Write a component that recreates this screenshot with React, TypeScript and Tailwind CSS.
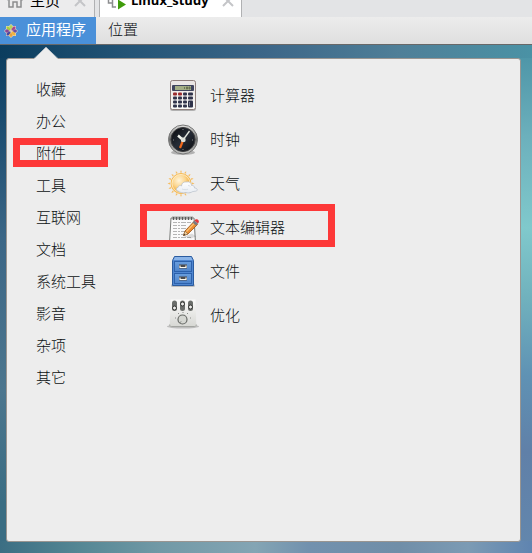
import type { ReactNode } from 'react';

function CalculatorIcon() {
  const cols = [5, 10, 15];
  const rows = [14, 18, 22, 26];
  return (
    <svg width="32" height="32" viewBox="0 0 32 32" aria-hidden="true">
      <defs>
        <linearGradient id="calcBody" x1="0" y1="0" x2="0" y2="1">
          <stop offset="0" stopColor="#e9e4e2" />
          <stop offset="1" stopColor="#fbfaf8" />
        </linearGradient>
      </defs>
      <rect x="3" y="2.5" width="26" height="29.5" rx="2.5" fill="#000" opacity=".25" />
      <rect x="3.5" y="1.5" width="25" height="29" rx="2" fill="url(#calcBody)" stroke="#8f7f7c" />
      <rect x="5" y="6" width="22" height="6" rx="1" fill="#40455e" />
      <rect x="8" y="7" width="16" height="4" fill="#a3ad84" />
      <path d="M17.5 8v2M19.5 8h1v2h-1zM22 8h1v2h-1z" stroke="#56603f" strokeWidth=".7" fill="none" />
      {rows.map((y, r) =>
        cols.map((x, c) => (
          <rect key={x + '-' + y} x={x + 1} y={y - 0.5} width="4" height="3" rx="1" fill={r === 0 && c < 2 ? '#9b2b2e' : '#30334a'} />
        )),
      )}
      <rect x="21" y="13.5" width="5" height="3" rx="1" fill="#30334a" />
      <rect x="21" y="17.5" width="5" height="3" rx="1" fill="#30334a" />
      <rect x="21" y="21.5" width="5" height="7" rx="1" fill="#30334a" />
      <path d="M22.5 23v4" stroke="#777a90" />
    </svg>
  );
}

function ClockIcon() {
  return (
    <svg width="32" height="32" viewBox="0 0 32 32" aria-hidden="true">
      <defs>
        <linearGradient id="clockRim" x1="0" y1="0" x2="0" y2="1">
          <stop offset="0" stopColor="#e2e2e0" />
          <stop offset=".5" stopColor="#6d6f6e" />
          <stop offset="1" stopColor="#c8c8c6" />
        </linearGradient>
        <linearGradient id="clockFace" x1="0" y1="0" x2="1" y2="1">
          <stop offset="0" stopColor="#08090b" />
          <stop offset=".5" stopColor="#252c37" />
          <stop offset="1" stopColor="#0b0c10" />
        </linearGradient>
      </defs>
      <ellipse cx="16" cy="29.5" rx="12" ry="2.5" fill="#000" opacity=".25" />
      <circle cx="16" cy="16.5" r="14.5" fill="url(#clockRim)" stroke="#777" />
      <circle cx="16" cy="16.5" r="12" fill="url(#clockFace)" stroke="#3a3a3c" />
      <path d="M16 6v1M16 26v1M6 17h1M25 17h1" stroke="#888" />
      <path d="M16 17L22.5 8" stroke="#e4e8e0" strokeWidth="1.3" />
      <path d="M16 17l-5-4.5" stroke="#f2f5ee" strokeWidth="2.4" />
      <path d="M15.8 18l-2.8 7" stroke="#ef681c" strokeWidth="2.2" />
      <rect x="14" y="14.5" width="4.5" height="4.5" rx="1.5" fill="#dce0d9" />
    </svg>
  );
}

function WeatherIcon() {
  const rays = [0, 22.5, 45, 67.5, 90, 112.5, 135, 157.5, 180, 202.5, 225, 247.5, 270, 292.5, 315, 337.5];
  return (
    <svg width="32" height="32" viewBox="0 0 32 32" aria-hidden="true">
      <defs>
        <radialGradient id="sunDisc" cx=".4" cy=".35">
          <stop offset="0" stopColor="#fff5dc" />
          <stop offset=".65" stopColor="#fbd58d" />
          <stop offset="1" stopColor="#f4b54b" />
        </radialGradient>
        <linearGradient id="cloudFill" x1="0" y1="0" x2="0" y2="1">
          <stop offset="0" stopColor="#ffffff" />
          <stop offset="1" stopColor="#e7ecf2" />
        </linearGradient>
      </defs>
      {rays.map((a) => (
        <path key={a} d="M13 5.5l1-2.5 1 2.5z" fill="#f6bd61" transform={`rotate(${a} 14 16.5)`} />
      ))}
      <circle cx="14" cy="16.5" r="10" fill="url(#sunDisc)" stroke="#f6bb56" strokeWidth="1" />
      <circle cx="14" cy="16.5" r="9" fill="none" stroke="#fff0cd" strokeWidth=".8" />
      <path
        d="M11 24c-2 0-2.500-3 0-3.500.3-2 2.500-2.300 3.500-1.500 0-3 2.500-4.500 5-4 3-.8 5 1 5 3.500 2-.3 3 .8 3 2.500 3.500.2 3.500 3 1 3.200-2 .3-3 .2-4 1-2 1-4 .8-5.500.3C16 26.500 13 25.500 11 24z"
        fill="url(#cloudFill)"
        stroke="#b5bdc8"
        strokeWidth=".7"
      />
      <path d="M15 22c2 .8 4 1 6 .2M21 18.500c1 0 2 .5 2.500 1.200" stroke="#ccd4dd" fill="none" strokeWidth=".7" />
    </svg>
  );
}

function EditorIcon() {
  return (
    <svg width="32" height="32" viewBox="0 0 32 32" aria-hidden="true">
      <path d="M4 7h23l1.500 25h-26z" fill="#fafafa" stroke="#777976" />
      <path d="M6 11.500h18M6 14.500h14M6 17.500h16M6 20.500h12M6 23.500h10M6 26.500h18M5 29.500h20" stroke="#b4b4b4" strokeDasharray="4 1 2 1 5 1" />
      <path d="M6.500 5v4M9.500 5v4M12.500 5v4M15.500 5v4M18.500 5v4M21.500 5v4M24.500 5v4" stroke="#5a5c5a" strokeWidth="1.500" />
      <path d="M6 5.500h1M9 5.500h1M12 5.500h1M15 5.500h1M18 5.500h1M21 5.500h1M24 5.500h1" stroke="#c5c5c3" />
      <path d="M17 25.500l8-3 4 3-5 2z" fill="#000" opacity=".12" />
      <path d="M16.500 24.500l1.500-4.500L27 10.500l3.500 3-9.500 9.500z" fill="#ec8c30" stroke="#9b5318" strokeWidth=".8" />
      <path d="M19.500 20.500l8-8.500" stroke="#fbc374" strokeWidth="1.200" />
      <path d="M16.500 24.500l1.500-4.500 3 3z" fill="#edcf9e" stroke="#8f6336" strokeWidth=".6" />
      <path d="M16.500 24.500l.6-1.800 1.200 1.200z" fill="#222" />
      <path d="M25.500 11.500l2-2 3.500 3-2 2z" fill="#777b80" />
      <path d="M27.500 9.500c1-1.500 2-1.500 3.500-.8 1.200 1 1 2.500 0 3.800z" fill="#e3373b" />
    </svg>
  );
}

function FilesIcon() {
  return (
    <svg width="32" height="32" viewBox="0 0 32 32" aria-hidden="true">
      <defs>
        <linearGradient id="drawer" x1="0" y1="0" x2="0" y2="1">
          <stop offset="0" stopColor="#699ede" />
          <stop offset="1" stopColor="#4d83ca" />
        </linearGradient>
      </defs>
      <rect x="4" y="29" width="24" height="3" rx="1.500" fill="#000" opacity=".2" />
      <path d="M7.500 1.500h17l2 4v25h-21v-25z" fill="#4f86d0" stroke="#2b5c9f" />
      <path d="M8 2h16l1.500 3H6.500z" fill="#8ab4e8" />
      <rect x="7.500" y="6.500" width="17" height="10" fill="url(#drawer)" stroke="#2c61ac" />
      <rect x="7.500" y="18.500" width="17" height="10" fill="url(#drawer)" stroke="#2c61ac" />
      <path d="M12 9.500h8v4h-8zM12 21.500h8v4h-8z" fill="#4a4b4e" />
      <path d="M13 10.500v2h6v-2M13 22.500v2h6v-2" fill="none" stroke="#fbf8ee" strokeWidth="1.200" />
    </svg>
  );
}

function TweaksIcon() {
  const switches = [
    { x: 7.500, knob: 9 },
    { x: 15.500, knob: 5 },
    { x: 23.500, knob: 8 },
  ];
  return (
    <svg width="32" height="32" viewBox="0 0 32 32" aria-hidden="true">
      <defs>
        <linearGradient id="tweakBody" x1="0" y1="0" x2="0" y2="1">
          <stop offset="0" stopColor="#fbfbfa" />
          <stop offset="1" stopColor="#d6d7d3" />
        </linearGradient>
      </defs>
      <ellipse cx="16" cy="27.500" rx="16" ry="2" fill="#000" opacity=".2" />
      <path d="M3.500.5h25l.8 26c0 1-.5 1.500-1.500 1.500H4.200c-1 0-1.500-.5-1.500-1.500z" fill="url(#tweakBody)" />
      <path d="M2.700 25.500c0 1.500.5 2 1.500 2h23.600c1 0 1.500-.5 1.500-2" stroke="#a3a5a1" fill="none" />
      {switches.map((s) => (
        <g key={s.x}>
          <rect x={s.x - 2.500} y="1.500" width="5" height="10.500" rx="2.500" fill="#6b6e6b" />
          <circle cx={s.x} cy={s.knob} r="2" fill="#eeeeec" stroke="#353735" />
        </g>
      ))}
      <path d="M8 19h1M11 14.500h1M15.500 13.500h1M20 14.500h1M23 19h1" stroke="#8b8d8a" />
      <circle cx="15.500" cy="20.500" r="4.500" fill="#d5d7d2" stroke="#666965" strokeWidth="1.200" />
      <path d="M12.500 24l1.500-1.500" stroke="#666965" />
    </svg>
  );
}

function DistroLogo() {
  return (
    <svg width="14" height="14" viewBox="0 0 14 14" aria-hidden="true">
      <path d="M7 0l2 2h3v3l2 2-2 2v3H9l-2 2-2-2H2V9L0 7l2-2V2h3z" fill="#e6dcc8" />
      <path d="M7 .5L9 3 7 5.500 5 3z" fill="#b5d35c" />
      <path d="M2.500 2.500h2L6.500 5v1.500H5l-2.500-2z" fill="#a8cc3f" />
      <path d="M11.500 2.500h-2L7.500 5v1.500H9l2.500-2z" fill="#a8458e" />
      <path d="M13.500 7L11 9 8.500 7 11 5z" fill="#6a4fa0" />
      <path d="M.5 7L3 5l2.500 2L3 9z" fill="#8a4596" />
      <path d="M11.500 11.500h-2L7.500 9V7.500H9l2.500 2z" fill="#f2b43c" />
      <path d="M2.500 11.500h2L6.500 9V7.500H5l-2.500 2z" fill="#4b4aa0" />
      <path d="M7 13.500L5 11l2-2.500L9 11z" fill="#e9a23b" />
    </svg>
  );
}

function CloseMark() {
  return (
    <svg width="12" height="12" viewBox="0 0 12 12" aria-hidden="true">
      <path d="M1 1l10 10M11 1L1 11" stroke="#c4c5c8" strokeWidth="2" />
    </svg>
  );
}

const categories = ['收藏', '办公', '附件', '工具', '互联网', '文档', '系统工具', '影音', '杂项', '其它'];

const apps: { name: string; icon: ReactNode }[] = [
  { name: '计算器', icon: <CalculatorIcon /> },
  { name: '时钟', icon: <ClockIcon /> },
  { name: '天气', icon: <WeatherIcon /> },
  { name: '文本编辑器', icon: <EditorIcon /> },
  { name: '文件', icon: <FilesIcon /> },
  { name: '优化', icon: <TweaksIcon /> },
];

export default function App() {
  return (
    <div className="flex min-h-screen flex-col font-['Liberation_Sans','Noto_Sans_CJK_SC',sans-serif] text-[15px] font-light text-[#0c1113]">
      <header className="flex h-[17px] items-end gap-1 overflow-hidden bg-[#e3e4e6]">
        <div className="flex h-8 w-[95px] items-center justify-between border-r border-[#b0b1b3] bg-[#ececed] pr-2 pl-[6px] font-normal text-black">
          <button type="button" className="flex items-center gap-[6px]">
            <svg width="18" height="18" viewBox="0 0 18 18" aria-hidden="true">
              <path d="M1 8l8-6 8 6M3 7v8h4v-5h4v5h4V7" fill="none" stroke="#8c8d8f" strokeWidth="1.500" />
            </svg>
            主页
          </button>
          <button type="button" aria-label="关闭主页">
            <CloseMark />
          </button>
        </div>
        <div className="flex h-8 w-[143px] items-center justify-between border-x border-[#b0b1b3] bg-white px-[7px] text-black">
          <button type="button" className="flex items-center gap-1 font-['Open_Sans',sans-serif] text-[13px] font-bold">
            <svg width="20" height="20" viewBox="0 0 20 20" aria-hidden="true">
              <path d="M5 12H1.500V1M9 16H5.500V1H15v7" fill="none" stroke="#8c8d8f" strokeWidth="1.500" />
              <path d="M11 8.500l8 5-8 5z" fill="#3f9c0b" />
            </svg>
            Linux_study
          </button>
          <button type="button" aria-label="关闭 Linux_study">
            <CloseMark />
          </button>
        </div>
      </header>

      <nav className="flex h-7 border-b border-[#686868] bg-linear-to-b from-[#ececec] to-[#dfdfdf]">
        <button type="button" className="flex w-24 items-center gap-2 bg-[#4a90d9] pl-1 font-normal whitespace-nowrap text-white">
          <DistroLogo />
          应用程序
        </button>
        <button type="button" className="px-3">
          位置
        </button>
      </nav>

      <main className="flex flex-1 flex-col bg-[linear-gradient(90deg,#0b3d5e,#245577_25%,#3c6688_50%,#4f7f98_75%,#4a92a5),linear-gradient(90deg,#3b6e83,#558794_15%,#7199a6_30%,#84a5b4_48%,#7291ae_58%,#708ea8_75%,#7c9bb4_88%,#5f84b0),linear-gradient(180deg,#0b3d5e,#1b4c6f_15%,#3b6686_38%,#4c768e_68%,#3a6d83_90%),linear-gradient(180deg,#4a92a5,#6cb0bc_18%,#80c9cc_36%,#70b1bd_50%,#5f92b4_65%,#6080a8_80%,#6387ad)] bg-[length:100%_13px,100%_12px,50%_100%,50%_100%] bg-[position:top,bottom,left,right] bg-no-repeat pt-[13px] pr-[11px] pb-[11px] pl-[6px]">
        <section aria-label="应用程序" className="relative flex flex-1 rounded-[3px] border border-[#999591] bg-[#ededed] py-[14px]">
          <svg className="absolute -top-3 left-[27px]" width="24" height="13" viewBox="0 0 24 13" aria-hidden="true">
            <path d="M0 12L12 0l12 12v1H0z" fill="#ededed" />
            <path d="M0 11.500L12 .5l12 11" fill="none" stroke="#d8dadb" strokeWidth=".6" />
          </svg>
          <ul className="w-[133px] shrink-0">
            {categories.map((name) => (
              <li key={name} className="relative">
                <button type="button" className="flex h-8 w-full items-center pt-0.5 pl-[29px]">
                  {name}
                </button>
                {name === '附件' && (
                  <span className="pointer-events-none absolute top-px left-[6px] h-[29px] w-[95px] border-7 border-[#fd3838]" />
                )}
              </li>
            ))}
          </ul>
          <ul className="flex-1">
            {apps.map((app) => (
              <li key={app.name} className="relative">
                <button type="button" className="flex h-11 w-full items-center gap-[11px] pl-[27px]">
                  {app.icon}
                  <span className="pt-0.5">{app.name}</span>
                </button>
                {app.name === '文本编辑器' && (
                  <span className="pointer-events-none absolute -top-px left-0 h-[43px] w-[195px] border-7 border-[#fd3838]" />
                )}
              </li>
            ))}
          </ul>
        </section>
      </main>
    </div>
  );
}
